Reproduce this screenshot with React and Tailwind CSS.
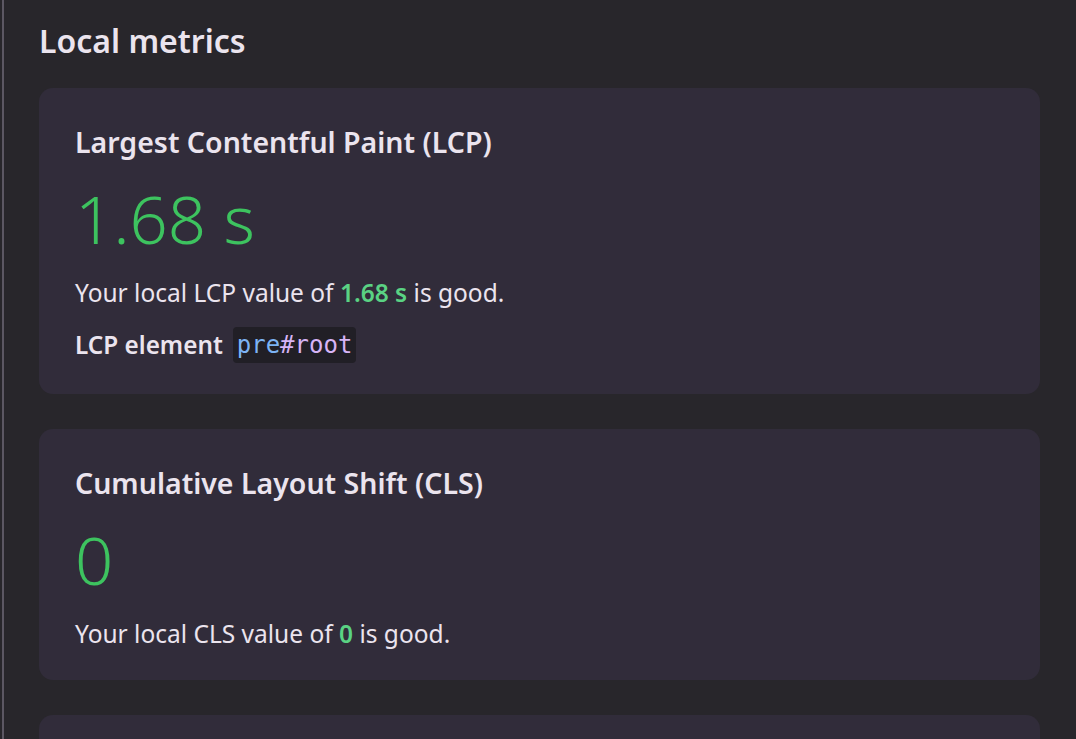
export default function App() {
  const font = { fontFamily: '"Noto Sans", "Open Sans", sans-serif' };
  return (
    <div className="min-h-screen bg-[#28262b] text-[#ebe4ee]" style={font}>
      <div className="ml-[2px] border-l-2 border-[#5c5763] min-h-screen pl-[35px] pr-[36px] pt-[19px]">
        <h1 className="text-[32px] font-semibold leading-[44px]">Local metrics</h1>
        <div className="mt-[25px] flex flex-col gap-[35px]">
          <section className="rounded-[14px] bg-[#312c3a] px-[36px] pt-[34px] pb-[31px]">
            <h2 className="text-[28.5px] font-semibold leading-[40px]">Largest Contentful Paint (LCP)</h2>
            <div className="mt-[16px] text-[67px] font-light leading-[80px] text-[#3dc35f]">1.68 s</div>
            <p className="mt-[18px] text-[24.5px] leading-[34px]">
              Your local LCP value of <span className="font-semibold text-[#5ad283]">1.68 s</span> is good.
            </p>
            <div className="mt-[17px] flex items-center gap-[10px]">
              <span className="text-[24.3px] font-semibold leading-[36px]">LCP element</span>
              <code className="rounded-[4px] bg-[#211f26] px-[4px] text-[24px] leading-[36px]" style={{ fontFamily: '"DejaVu Sans Mono", monospace' }}>
                <span className="text-[#7db4f5]">pre</span>
                <span className="text-[#d7b4f6]">#root</span>
              </code>
            </div>
          </section>
          <section className="rounded-[14px] bg-[#312c3a] px-[36px] pt-[34px] pb-[29px]">
            <h2 className="text-[28.5px] font-semibold leading-[40px]">Cumulative Layout Shift (CLS)</h2>
            <div className="mt-[16px] text-[67px] font-light leading-[80px] text-[#3dc35f]">0</div>
            <p className="mt-[18px] text-[24.5px] leading-[34px]">
              Your local CLS value of <span className="font-semibold text-[#5ad283]">0</span> is good.
            </p>
          </section>
          <section className="h-[120px] rounded-[14px] bg-[#312c3a]" />
        </div>
      </div>
    </div>
  );
}
